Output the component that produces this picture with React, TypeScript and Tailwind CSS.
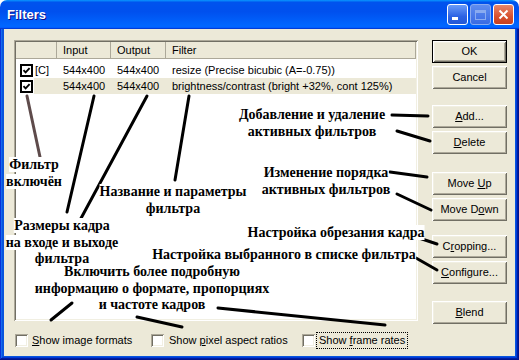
import type { ReactNode } from 'react'

function Btn({ children, def, className = '' }: { children: ReactNode; def?: boolean; className?: string }) {
  return (
    <div className={`h-[23px] w-[75px] shrink-0 bg-[#ece9d8] ${def ? 'border border-black' : ''} ${className}`}>
      <div className="h-full w-full flex items-center justify-center leading-none shadow-[inset_1px_1px_0_#ffffff,inset_-1px_-1px_0_#716f64,inset_2px_2px_0_#f1efe2,inset_-2px_-2px_0_#aca899]">
        {children}
      </div>
    </div>
  )
}

function Check3D() {
  return (
    <div className="w-[13px] h-[13px] shrink-0 bg-white shadow-[inset_1px_1px_0_#aca899,inset_-1px_-1px_0_#ffffff,inset_2px_2px_0_#716f64,inset_-2px_-2px_0_#f1efe2]" />
  )
}

function ListCheck() {
  return (
    <div className="w-[13px] h-[13px] shrink-0 border-2 border-black bg-white flex items-center justify-center">
      <svg width="9" height="9" viewBox="0 0 9 9">
        <path d="M1.5 4.2 L3.6 6.3 L7.6 2.2" stroke="#000" strokeWidth="1.9" fill="none" />
      </svg>
    </div>
  )
}

function Note({ className, lines, plain }: { className: string; lines: string[]; plain?: boolean }) {
  return (
    <div className={`absolute -translate-x-1/2 text-center whitespace-nowrap ${className}`}>
      {lines.map((l, i) => (
        <div key={i}>
          <span className={plain ? '' : 'bg-white'}>{l}</span>
        </div>
      ))}
    </div>
  )
}

const rows = [
  { tag: '[C]', input: '544x400', output: '544x400', filter: 'resize (Precise bicubic (A=-0.75))', sel: false },
  { tag: '', input: '544x400', output: '544x400', filter: 'brightness/contrast (bright +32%, cont 125%)', sel: true },
]

// annotation arrows: [x1, y1, x2, y2]
const arrows = [
  [94, 96, 67, 212],
  [147, 96, 79, 222],
  [189, 96, 175, 180],
  [392, 115, 428, 116],
  [397, 131, 430, 141],
  [390, 172, 427, 177],
  [397, 194, 431, 210],
  [416, 237, 437, 244],
  [416, 258, 437, 270],
  [72, 303, 51, 320],
  [137, 317, 182, 327],
  [218, 308, 385, 325],
]

export default function App() {
  return (
    <div className="relative w-[519px] h-[360px] flex flex-col bg-white font-['Liberation_Sans',Arial,sans-serif] text-[11px] text-black select-none">
      {/* title bar */}
      <div className="h-[29px] shrink-0 rounded-t-[7px] flex items-center pl-[7px] pr-[5px] bg-[linear-gradient(180deg,#0997ff,#0053ee_8%,#0050ee_40%,#0066ff_88%,#0066ff_93%,#005bff_95%,#003dd7_96%,#003dd7)]">
        <span className="text-white font-bold text-[13px] [text-shadow:1px_1px_#0f1089]">Filters</span>
        <div className="ml-auto flex gap-[2px]">
          <div className="w-[21px] h-[21px] rounded-[3px] border border-white bg-[linear-gradient(180deg,#6a9cf8,#2c62e4_60%,#2458d6)] relative">
            <div className="absolute left-[4px] top-[12px] w-[6px] h-[3px] bg-white" />
          </div>
          <div className="w-[21px] h-[21px] rounded-[3px] border border-[#8aabf0] bg-[linear-gradient(180deg,#5e8cef,#3a6be4)] flex items-center justify-center">
            <div className="w-[11px] h-[10px] border border-[#8aabf0] border-t-[3px]" />
          </div>
          <div className="w-[21px] h-[21px] rounded-[3px] border border-white bg-[linear-gradient(180deg,#e9876a,#d8512f_60%,#c8401f)] flex items-center justify-center">
            <svg width="11" height="11" viewBox="0 0 11 11">
              <path d="M1.5 1.5 L9.5 9.5 M9.5 1.5 L1.5 9.5" stroke="#fff" strokeWidth="2" />
            </svg>
          </div>
        </div>
      </div>

      {/* frame */}
      <div className="flex-1 flex px-[4px] pb-[4px] bg-[#0855dd] shadow-[inset_-1px_-1px_#00138c,inset_1px_0_#0831d9,inset_-2px_-2px_#001ea0,inset_2px_0_#166aee,inset_-3px_-3px_#003bda,inset_3px_0_#0855dd]">
        <div className="flex-1 flex bg-[#ece9d8] pl-[10px] pt-[11px] pr-[8px]">
          {/* left column */}
          <div className="w-[404px] flex flex-col">
            <div className="h-[281px] p-[2px] bg-white shadow-[inset_1px_1px_0_#aca899,inset_-1px_-1px_0_#ffffff,inset_2px_2px_0_#716f64,inset_-2px_-2px_0_#f1efe2]">
              <div className="h-full bg-white">
                <div className="h-[17px] flex bg-[#ece9d8] border-b border-[#aca899] leading-[16px]">
                  <div className="w-[41px] border-r border-[#aca899]" />
                  <div className="w-[54px] pl-[6px] border-r border-[#aca899]">Input</div>
                  <div className="w-[55px] pl-[6px] border-r border-[#aca899]">Output</div>
                  <div className="flex-1 pl-[6px] border-r border-[#aca899]">Filter</div>
                </div>
                <div className="pt-[3px]">
                  {rows.map((r, i) => (
                    <div key={i} className="h-[16px] flex items-center leading-[16px]">
                      <div className="w-[18px] pl-[4px] flex items-center">
                        <ListCheck />
                      </div>
                      <div className={`flex-1 h-full flex ${r.sel ? 'bg-[#ece9d8]' : ''}`}>
                        <div className="w-[23px] pl-[1px]">{r.tag}</div>
                        <div className="w-[54px] pl-[6px]">{r.input}</div>
                        <div className="w-[55px] pl-[6px]">{r.output}</div>
                        <div className="flex-1 pl-[6px] whitespace-nowrap">{r.filter}</div>
                      </div>
                    </div>
                  ))}
                </div>
              </div>
            </div>
            <div className="mt-[11px] flex items-center leading-[13px]">
              <div className="w-[137px] pl-[1px] flex items-center gap-[4px]">
                <Check3D />
                <span><u>S</u>how image formats</span>
              </div>
              <div className="w-[151px] flex items-center gap-[5px]">
                <Check3D />
                <span>Show <u>p</u>ixel aspect ratios</span>
              </div>
              <div className="flex items-center gap-[1px]">
                <Check3D />
                <span className="border border-dotted border-black px-[2px] py-[1px]">Show <u>f</u>rame rates</span>
              </div>
            </div>
          </div>

          {/* buttons */}
          <div className="ml-auto w-[75px] flex flex-col">
            <Btn def>OK</Btn>
            <Btn className="mt-[3px]">Cancel</Btn>
            <Btn className="mt-[16px]"><span><u>A</u>dd...</span></Btn>
            <Btn className="mt-[3px]"><span><u>D</u>elete</span></Btn>
            <Btn className="mt-[18px]"><span>Move <u>U</u>p</span></Btn>
            <Btn className="mt-[3px]"><span>Move D<u>o</u>wn</span></Btn>
            <Btn className="mt-[14px]"><span>C<u>r</u>opping...</span></Btn>
            <Btn className="mt-[3px]"><span><u>C</u>onfigure...</span></Btn>
            <Btn className="mt-[17px]"><span><u>B</u>lend</span></Btn>
          </div>
        </div>
      </div>

      {/* annotations */}
      <div className="absolute inset-0 pointer-events-none font-['Liberation_Serif','Times_New_Roman',serif] font-bold text-[14px] leading-[16.5px] text-black">
        <svg className="absolute left-0 top-0" width="519" height="360">
          <line x1="27" y1="96" x2="40" y2="157" stroke="#5e4b4b" strokeWidth="3" strokeLinecap="round" />
          {arrows.map(([x1, y1, x2, y2], i) => (
            <line key={i} x1={x1} y1={y1} x2={x2} y2={y2} stroke="#000" strokeWidth="3" strokeLinecap="round" />
          ))}
        </svg>
        <Note plain className="left-[152px] top-[264px]" lines={['Включить более подробную', 'информацию о формате, пропорциях', 'и частоте кадров']} />
        <Note className="left-[34px] top-[157px]" lines={['Фильтр', 'включён']} />
        <Note className="left-[173px] top-[184px]" lines={['Название и параметры', 'фильтра']} />
        <Note className="left-[62px] top-[218px]" lines={['Размеры кадра', 'на входе и выходе', 'фильтра']} />
        <Note className="left-[312px] top-[107px]" lines={['Добавление и удаление', 'активных фильтров']} />
        <Note className="left-[326px] top-[165px]" lines={['Изменение порядка', 'активных фильтров']} />
        <Note className="left-[336px] top-[225px]" lines={['Настройка обрезания кадра']} />
        <Note className="left-[284px] top-[247px]" lines={['Настройка выбранного в списке фильтра']} />
      </div>
    </div>
  )
}
